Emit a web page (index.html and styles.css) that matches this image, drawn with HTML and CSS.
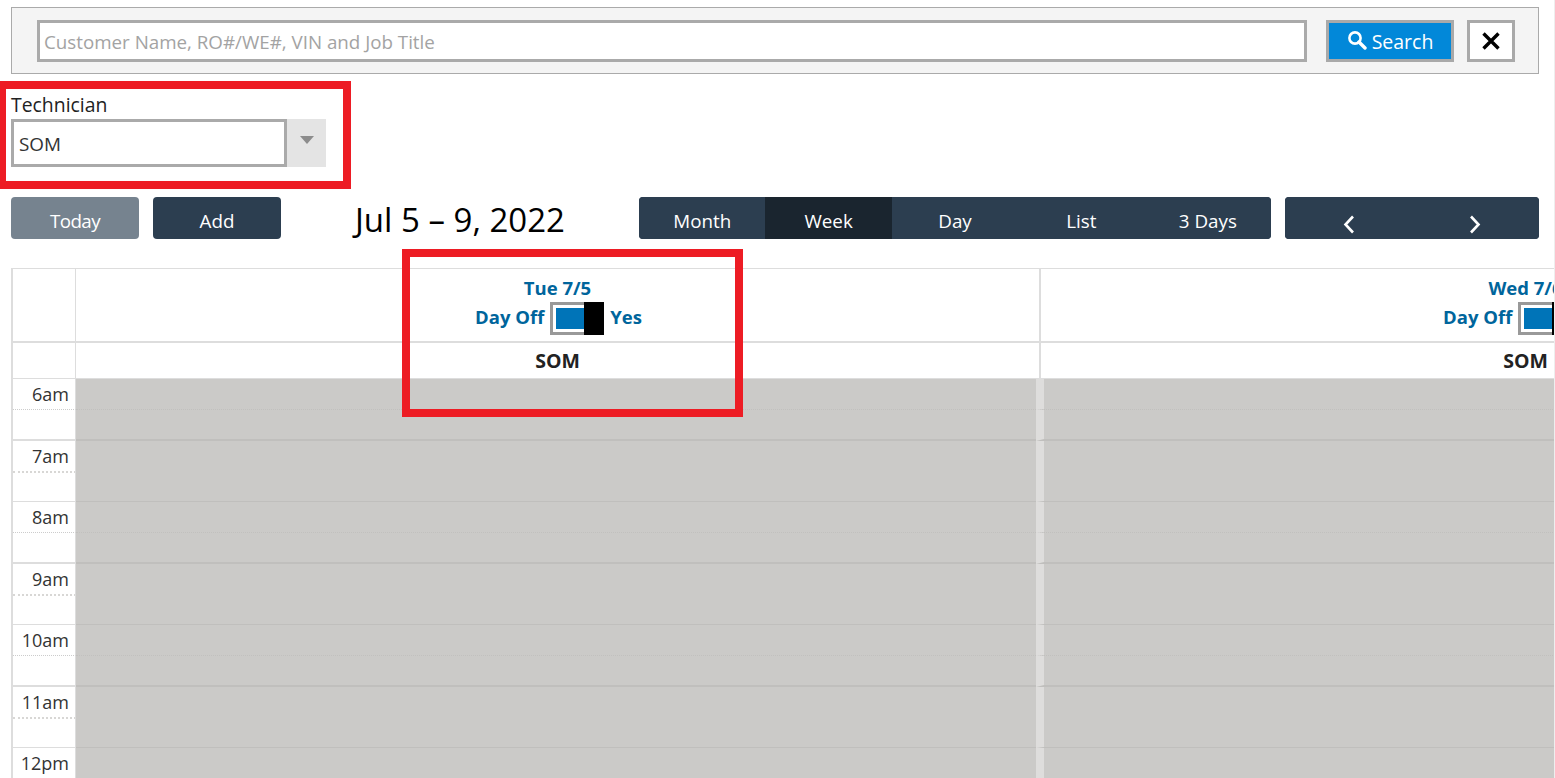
FILE: index.html
```html
<!DOCTYPE html>
<html lang="en">
<head>
  <meta charset="UTF-8">
  <meta name="viewport" content="width=device-width, initial-scale=1.0">
  <title>Technician Schedule</title>
  <link rel="stylesheet" href="styles.css">
</head>
<body>
  <div class="page">
    <!-- Search bar -->
    <div class="search-panel">
      <input class="search-input" type="text" placeholder="Customer Name, RO#/WE#, VIN and Job Title">
      <button class="search-btn">
        <svg width="20" height="20" viewBox="0 0 20 20"><circle cx="8" cy="8" r="5.6" fill="none" stroke="#fff" stroke-width="2.6"/><path d="M12 12l6 6" stroke="#fff" stroke-width="3.4" stroke-linecap="round"/></svg>
        Search
      </button>
      <button class="clear-btn">
        <svg width="20" height="20" viewBox="0 0 20 20"><path d="M2.5 2.5l15 15M17.5 2.5l-15 15" stroke="#000" stroke-width="3.4"/></svg>
      </button>
    </div>

    <!-- Technician filter -->
    <div class="filter">
      <label class="filter-label">Technician</label>
      <div class="combo">
        <div class="combo-value">SOM</div>
        <div class="combo-arrow"><span class="caret"></span></div>
      </div>
    </div>

    <!-- Calendar toolbar -->
    <div class="toolbar">
      <button class="btn btn-muted">Today</button>
      <button class="btn btn-add">Add</button>
      <h2 class="cal-title">Jul 5 – 9, 2022</h2>
      <div class="btn-group views">
        <button class="btn">Month</button>
        <button class="btn active">Week</button>
        <button class="btn">Day</button>
        <button class="btn">List</button>
        <button class="btn">3 Days</button>
      </div>
      <div class="btn-group nav">
        <button class="btn"><svg width="14" height="20" viewBox="0 0 14 20"><path d="M11 2.500L3.500 10.500l7.500 8" fill="none" stroke="#fff" stroke-width="2.6"/></svg></button>
        <button class="btn"><svg width="14" height="20" viewBox="0 0 14 20"><path d="M2 2.500l7.500 8L2 18.500" fill="none" stroke="#fff" stroke-width="2.6"/></svg></button>
      </div>
    </div>

    <!-- Calendar -->
    <div class="calendar">
      <div class="head-row head-days">
        <div class="head-time"></div>
        <div class="head-day">
          <div class="day-name">Tue 7/5</div>
          <div class="day-off"><span class="off-label">Day Off</span> <span class="toggle"><span class="toggle-fill"></span><span class="toggle-knob"></span></span> <span class="off-label">Yes</span></div>
        </div>
        <div class="head-day">
          <div class="day-name">Wed 7/6</div>
          <div class="day-off"><span class="off-label">Day Off</span> <span class="toggle"><span class="toggle-fill"></span><span class="toggle-knob"></span></span> <span class="off-label">Yes</span></div>
        </div>
      </div>
      <div class="head-row head-tech">
        <div class="head-time"></div>
        <div class="head-day">SOM</div>
        <div class="head-day">SOM</div>
      </div>

      <div class="slot hour"><div class="slot-time">6am</div><div class="slot-day"></div><div class="slot-day"></div></div>
      <div class="slot half"><div class="slot-time"></div><div class="slot-day"></div><div class="slot-day"></div></div>
      <div class="slot hour"><div class="slot-time">7am</div><div class="slot-day"></div><div class="slot-day"></div></div>
      <div class="slot half"><div class="slot-time"></div><div class="slot-day"></div><div class="slot-day"></div></div>
      <div class="slot hour"><div class="slot-time">8am</div><div class="slot-day"></div><div class="slot-day"></div></div>
      <div class="slot half"><div class="slot-time"></div><div class="slot-day"></div><div class="slot-day"></div></div>
      <div class="slot hour"><div class="slot-time">9am</div><div class="slot-day"></div><div class="slot-day"></div></div>
      <div class="slot half"><div class="slot-time"></div><div class="slot-day"></div><div class="slot-day"></div></div>
      <div class="slot hour"><div class="slot-time">10am</div><div class="slot-day"></div><div class="slot-day"></div></div>
      <div class="slot half"><div class="slot-time"></div><div class="slot-day"></div><div class="slot-day"></div></div>
      <div class="slot hour"><div class="slot-time">11am</div><div class="slot-day"></div><div class="slot-day"></div></div>
      <div class="slot half"><div class="slot-time"></div><div class="slot-day"></div><div class="slot-day"></div></div>
      <div class="slot hour"><div class="slot-time">12pm</div><div class="slot-day"></div><div class="slot-day"></div></div>
    </div>

    <!-- Red annotation boxes -->
    <div class="callout callout-filter"></div>
    <div class="callout callout-day"></div>
  </div>
</body>
</html>
```

FILE: styles.css
```css
html, body {
  margin: 0;
  height: 100%;
  overflow: hidden;
  background-color: white;
}

body {
  font-family: "Open Sans", "Noto Sans", sans-serif;
  color: #222;
}

.page {
  position: relative;
  box-sizing: border-box;
  width: 1555px;
  height: 778px;
  padding: 7px 0 0 11px;
  border-right: 1px solid #eee;
  overflow: hidden;
}

button {
  font-family: inherit;
  cursor: pointer;
}

/* Search bar */
.search-panel {
  box-sizing: border-box;
  display: flex;
  align-items: center;
  width: 1528px;
  height: 67px;
  padding: 0 23px 0 25px;
  background-color: #f4f4f4;
  border: 1px solid #aaa;
}

.search-input {
  box-sizing: border-box;
  width: 1270px;
  height: 42px;
  padding: 2px 4px 0;
  font-family: inherit;
  font-size: 18.75px;
  background-color: white;
  border: 3px solid #aaa;
  outline: none;
}

.search-input::placeholder {
  color: #a3a3a3;
  opacity: 1;
}

.search-btn {
  box-sizing: border-box;
  display: flex;
  align-items: center;
  justify-content: center;
  gap: 5px;
  width: 128px;
  height: 42px;
  margin-left: 19px;
  padding: 2px 0 0;
  font-size: 19.5px;
  color: white;
  background-color: #0288d9;
  border: 3px solid #a9a9a9;
}

.search-btn svg {
  margin-top: -3px;
}

.clear-btn {
  box-sizing: border-box;
  display: flex;
  align-items: center;
  justify-content: center;
  width: 48px;
  height: 42px;
  margin-left: 13px;
  padding: 0;
  background-color: white;
  border: 3px solid #a9a9a9;
}

/* Technician filter */
.filter {
  margin-top: 18px;
}

.filter-label {
  display: block;
  height: 27px;
  font-size: 19.4px;
  line-height: 25px;
  color: #222;
}

.combo {
  display: flex;
  width: 315px;
  height: 48px;
}

.combo-value {
  box-sizing: border-box;
  width: 276px;
  padding-left: 5px;
  font-size: 18.9px;
  line-height: 44px;
  color: #333;
  border: 3px solid #aaa;
}

.combo-arrow {
  display: flex;
  align-items: center;
  justify-content: center;
  flex: 1;
  padding-bottom: 7px;
  background-color: #e4e4e4;
}

.caret {
  border-left: 7px solid transparent;
  border-right: 7px solid transparent;
  border-top: 8px solid #8c8c8c;
}

/* Toolbar */
.toolbar {
  display: flex;
  align-items: center;
  height: 42px;
  margin-top: 30px;
}

.btn {
  height: 42px;
  padding: 5px 0 0;
  font-size: 18.8px;
  color: white;
  background-color: #2c3e50;
  border: none;
}

.btn-muted {
  width: 128px;
  letter-spacing: -0.6px;
  background-color: #76838f;
  border-radius: 4px;
}

.btn-add {
  width: 128px;
  margin-left: 14px;
  border-radius: 4px;
}

.cal-title {
  width: 284px;
  margin: 0 0 0 74px;
  padding-top: 3px;
  font-size: 33px;
  font-weight: 400;
  color: #000;
}

.btn-group {
  display: flex;
  overflow: hidden;
  background-color: #2c3e50;
  border-radius: 4px;
}

.btn-group .btn {
  flex: 1;
}

.btn-group .active {
  background-color: #1a252f;
}

.views {
  width: 632px;
}

.nav {
  width: 254px;
  margin-left: 14px;
}

.nav .btn {
  padding-top: 11px;
}

.nav svg {
  display: block;
  margin: 0 auto;
}

/* Calendar */
.calendar {
  width: 1544px;
  margin-top: 29px;
  border-top: 1px solid #ddd;
  border-left: 2px solid #ddd;
}

.head-row {
  display: grid;
  grid-template-columns: 63px 965px 971px;
}

.head-time {
  border-right: 1px solid #ddd;
}

.head-day {
  border-right: 2px solid #ddd;
  text-align: center;
}

.head-days {
  height: 72px;
  border-bottom: 2px solid #ddd;
}

.head-tech {
  height: 35px;
  font-size: 19.5px;
  font-weight: 700;
  line-height: 36px;
  border-bottom: 1px solid #ddd;
}

.day-name {
  margin-top: 7px;
  font-size: 18.5px;
  font-weight: 700;
  line-height: 24px;
  color: #00659c;
}

.day-off {
  display: flex;
  align-items: center;
  justify-content: center;
  gap: 6px;
  height: 33px;
  margin-top: 2px;
  padding-left: 2px;
  font-size: 18.5px;
  font-weight: 700;
  color: #00659c;
}

.off-label {
  margin-bottom: 4px;
  line-height: 27px;
}

.toggle {
  box-sizing: border-box;
  display: flex;
  width: 54px;
  height: 33px;
  padding: 3px 0 3px 3px;
  border: 3px solid #999;
  border-right: none;
}

.toggle-fill {
  width: 28px;
  background-color: #0074b8;
}

.toggle-knob {
  width: 20px;
  height: 33px;
  margin: -6px 0;
  background-color: black;
}

.slot {
  box-sizing: border-box;
  display: grid;
  grid-template-columns: 63px 960px 1fr;
  height: 30.75px;
}

.slot-time {
  box-sizing: border-box;
  padding-right: 6px;
  font-size: 18px;
  line-height: 30px;
  text-align: right;
  color: #333;
  border-right: 1px solid #ddd;
}

.slot-day {
  background-color: #cbcac8;
}

.slot-day:last-child {
  border-left: 8px solid #dedddc;
}

.hour .slot-time {
  border-bottom: 1px dotted #ccc;
}

.hour .slot-day {
  border-bottom: 1px dotted #c1c0be;
}

.hour:nth-child(4n+1) .slot-time,
.hour:nth-child(4n+1) .slot-day {
  border-bottom: 2px dotted #d8d7d5;
}

.half .slot-time {
  border-bottom: 2px solid #ddd;
}

.half .slot-day {
  border-bottom: 2px solid #c0bfbd;
}

.half:nth-child(4n+2) .slot-time {
  border-bottom-width: 1px;
}

.half:nth-child(4n+2) .slot-day {
  border-bottom-width: 1px;
}

/* Red annotation boxes */
.callout {
  position: absolute;
  box-sizing: border-box;
  border: 8px solid #ed1c24;
}

.callout-filter {
  left: -2px;
  top: 81px;
  width: 353px;
  height: 108px;
}

.callout-day {
  left: 402px;
  top: 249px;
  width: 341px;
  height: 168px;
}
```
